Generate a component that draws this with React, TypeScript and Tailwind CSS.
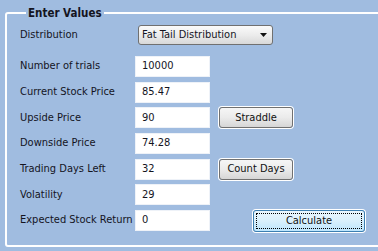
import type { ReactNode } from 'react'

const font = { fontFamily: '"DejaVu Sans Condensed", "Liberation Sans", sans-serif' }

const fields: { label: string; value: string; extra?: ReactNode }[] = [
  { label: 'Number of trials', value: '10000' },
  { label: 'Current Stock Price', value: '85.47' },
  { label: 'Upside Price', value: '90', extra: <GrayButton text="Straddle" /> },
  { label: 'Downside Price', value: '74.28' },
  { label: 'Trading Days Left', value: '32', extra: <GrayButton text="Count Days" /> },
  { label: 'Volatility', value: '29' },
  { label: 'Expected Stock Return', value: '0', extra: <CalcButton /> },
]

function GrayButton({ text }: { text: string }) {
  return (
    <button className="ml-[9px] h-[21px] w-[74px] rounded-[3px] border border-[#707070] bg-gradient-to-b from-[#f6f6f6] via-[#ebebeb] to-[#d6d6d6] text-[11px] text-[#111] shadow-[0_0_0_1px_#fff]">
      {text}
    </button>
  )
}

function CalcButton() {
  return (
    <button className="ml-[43px] mt-[2px] flex h-[22px] w-[112px] items-center justify-center rounded-[3px] border border-[#3c7fb1] bg-gradient-to-b from-[#eaf6fd] via-[#d9f0fc] to-[#bee6fd] p-[2px] text-[11px] text-[#111] shadow-[0_0_0_1px_#fff]">
      <span className="flex h-full w-full items-center justify-center border border-dotted border-black">Calculate</span>
    </button>
  )
}

export default function App() {
  return (
    <div className="h-[251px] w-[378px] overflow-hidden bg-[#a0bce0] pl-[5px] pt-[6px] text-[11px] text-[#14141e]" style={font}>
      <fieldset className="h-[241px] w-[420px] rounded-[3px] border-2 border-white pl-[13px]">
        <legend className="ml-[6px] px-[2px] text-[11.5px] font-bold leading-[14px]">Enter Values</legend>
        <div className="flex flex-col">
          <div className="mt-[5px] flex h-[20px] items-center">
            <span className="w-[118px]">Distribution</span>
            <div className="flex h-[20px] w-[135px] items-center justify-between rounded-[3px] border border-[#707070] bg-gradient-to-b from-[#fafafa] via-[#ececec] to-[#d8d8d8] pl-[3px] pr-[5px]">
              <span>Fat Tail Distribution</span>
              <svg width="7" height="4" viewBox="0 0 7 4">
                <path d="M0 0h7L3.5 4z" fill="#111" />
              </svg>
            </div>
          </div>
          <div className="mt-[11px] flex flex-col gap-[4.67px]">
            {fields.map((f) => (
              <div key={f.label} className="flex h-[21px] items-center">
                <span className="w-[115px]">{f.label}</span>
                <div className="flex h-[21px] w-[75px] items-center border border-[#eef2f8] bg-white pl-[6px]">{f.value}</div>
                {f.extra}
              </div>
            ))}
          </div>
        </div>
      </fieldset>
    </div>
  )
}
